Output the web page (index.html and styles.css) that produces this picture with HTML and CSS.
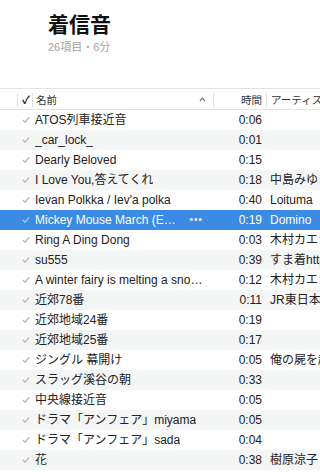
FILE: index.html
```html
<!DOCTYPE html>
<html lang="ja">
  <head>
    <meta charset="UTF-8" />
    <meta name="viewport" content="width=device-width, initial-scale=1.0" />
    <title>着信音</title>
    <link rel="stylesheet" href="styles.css">
  </head>

  <body>
    <div class="playlist-head">
      <h1 class="playlist-title">着信音</h1>
      <p class="playlist-meta">26項目・6分</p>
    </div>

    <div class="track-table">
      <div class="track-row header-row">
        <div class="cell col-gap"></div>
        <div class="cell col-check head-cell"><span class="head-check">✓</span></div>
        <div class="cell col-name head-cell">
          <span class="head-label">名前</span>
          <svg class="sort-caret" width="7" height="5" viewBox="0 0 7 5">
            <path d="M1 4 L3.5 1.2 L6 4" fill="none" stroke="#7a7a7a" stroke-width="1.2" />
          </svg>
        </div>
        <div class="cell col-time head-cell"><span class="head-label">時間</span></div>
        <div class="cell col-artist head-cell"><span class="head-label">アーティスト</span></div>
      </div>

      <div id="trackRows"></div>
    </div>

    <script>
      const tracks = [
        ["ATOS列車接近音", "0:06", ""],
        ["_car_lock_", "0:01", ""],
        ["Dearly Beloved", "0:15", ""],
        ["I Love You,答えてくれ", "0:18", "中島みゆき"],
        ["Ievan Polkka / Iev'a polka", "0:40", "Loituma"],
        ["Mickey Mouse March (Eurobeat Version)", "0:19", "Domino"],
        ["Ring A Ding Dong", "0:03", "木村カエラ"],
        ["su555", "0:39", "すま着http://sumaki.jp"],
        ["A winter fairy is melting a snowflake", "0:12", "木村カエラ"],
        ["近郊78番", "0:11", "JR東日本"],
        ["近郊地域24番", "0:19", ""],
        ["近郊地域25番", "0:17", ""],
        ["ジングル 幕開け", "0:05", "俺の屍を越えてゆけ"],
        ["スラッグ溪谷の朝", "0:33", ""],
        ["中央線接近音", "0:05", ""],
        ["ドラマ「アンフェア」miyama", "0:05", ""],
        ["ドラマ「アンフェア」sada", "0:04", ""],
        ["花", "0:38", "樹原涼子"]
      ];
      const selectedIndex = 5;

      const checkIcon =
        '<svg width="8" height="8" viewBox="0 0 8 8"><path d="M1.2 4.2 L3.2 6.2 L6.8 1.6" fill="none" stroke="currentColor" stroke-width="1.3" stroke-linecap="round" stroke-linejoin="round"/></svg>';

      const trackRows = document.getElementById("trackRows");

      tracks.forEach((track, i) => {
        const row = document.createElement("div");
        row.className = "track-row";
        if (i % 2 === 1) row.classList.add("striped");
        if (i === selectedIndex) row.classList.add("selected");

        let nameHtml = `<span class="name-text">${track[0]}</span>`;
        if (i === selectedIndex) {
          nameHtml += `<span class="more-dots">•••</span>`;
        }

        row.innerHTML = `
          <div class="cell col-gap"></div>
          <div class="cell col-check"><span class="row-check">${checkIcon}</span></div>
          <div class="cell col-name">${nameHtml}</div>
          <div class="cell col-time">${track[1]}</div>
          <div class="cell col-artist">${track[2]}</div>
        `;
        trackRows.appendChild(row);
      });
    </script>
  </body>
</html>
```

FILE: styles.css
```css
body {
  margin: 0;
  background: #ffffff;
  color: #222;
  font-family: "Liberation Sans", "Noto Sans CJK JP", sans-serif;
  overflow: hidden;
}

.playlist-head {
  padding: 13px 0 0 48px;
  height: 88px;
  box-sizing: border-box;
}

.playlist-title {
  margin: 0;
  font-size: 21px;
  line-height: 24px;
  font-weight: bold;
  color: #111;
}

.playlist-meta {
  margin: 3px 0 0;
  font-size: 11px;
  line-height: 14px;
  color: #a3a3a3;
}

.track-table {
  width: 100%;
}

.track-row {
  display: grid;
  grid-template-columns: 17px 15px 181px 53px 1fr;
  height: 20px;
  align-items: center;
  font-size: 12px;
  line-height: 20px;
  white-space: nowrap;
}

.track-row.striped {
  background: #f4f5f5;
}

.track-row.selected {
  background: #3b8be5;
  color: #ffffff;
}

.cell {
  overflow: hidden;
  height: 100%;
}

.header-row {
  height: 15px;
  padding: 3px 0 2px;
  box-sizing: content-box;
  border-top: 1px solid #e3e3e3;
  border-bottom: 1px solid #e3e3e3;
  line-height: 14px;
}

.head-cell {
  height: 14px;
  border-left: 1px solid #e0e0e0;
  display: flex;
  align-items: center;
}

.head-label {
  font-size: 10.5px;
  color: #333;
}

.head-check {
  font-size: 11px;
  font-weight: bold;
  color: #222;
  margin-left: 4px;
}

.sort-caret {
  margin-left: auto;
  margin-right: 7px;
}

.col-check {
  display: flex;
  align-items: center;
  justify-content: center;
}

.header-row .col-check {
  justify-content: flex-start;
}

.row-check {
  display: flex;
  color: #b9b9b9;
  margin-left: 2px;
}

.selected .row-check {
  color: #a9c9f2;
}

.col-name {
  display: flex;
  align-items: center;
  padding-left: 3px;
  padding-right: 7px;
}

.header-row .col-name {
  padding-right: 0;
}

.name-text {
  overflow: hidden;
  text-overflow: ellipsis;
  min-width: 0;
}

.more-dots {
  margin-left: 9px;
  margin-right: 3px;
  font-size: 10px;
  letter-spacing: 1px;
}

.col-time {
  text-align: right;
  padding-right: 4px;
}

.header-row .col-time {
  justify-content: flex-end;
}

.col-artist {
  padding-left: 4px;
}
```
